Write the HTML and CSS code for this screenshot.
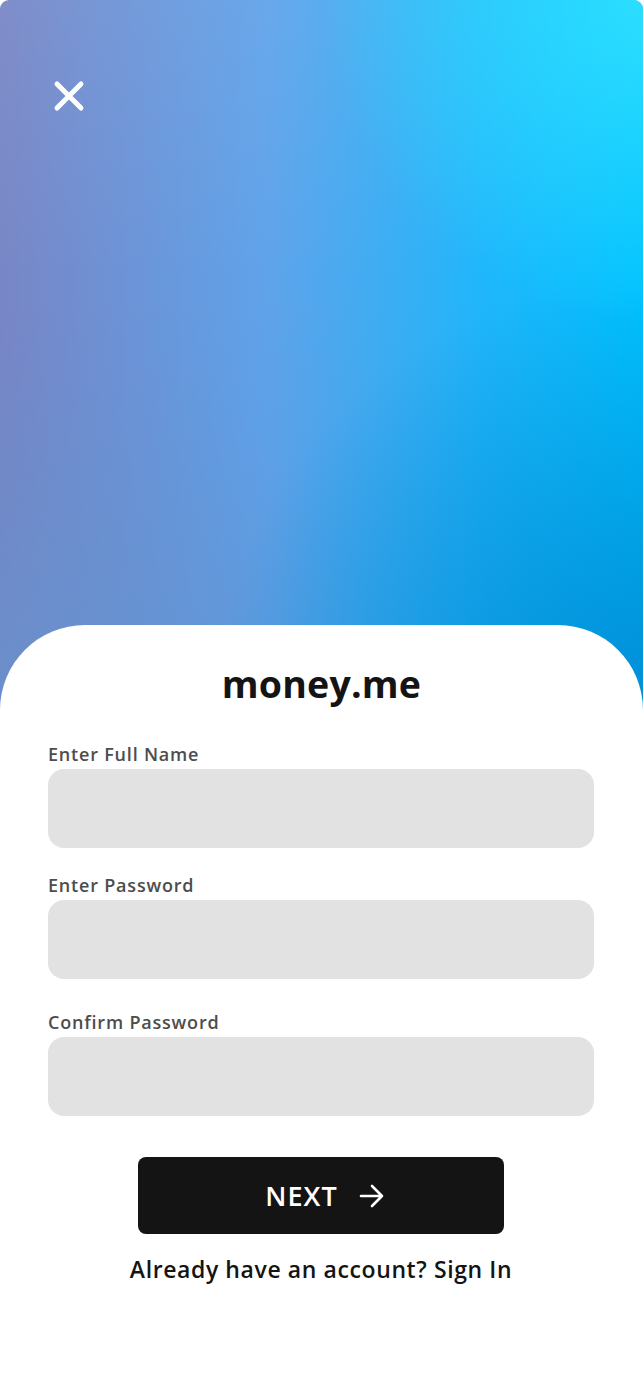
FILE: index.html
```html
<!DOCTYPE html>
<html lang="en">
<head>
<meta charset="utf-8">
<title>money.me – Sign up</title>
<link rel="stylesheet" href="styles.css">
</head>
<body>
<div class="screen">
  <header class="hero">
    <button class="close" aria-label="Close">
      <svg width="32" height="32" viewBox="0 0 32 32" fill="none" stroke="#fff" stroke-width="5" stroke-linecap="round">
        <path d="M4 4 L28 28 M28 4 L4 28"/>
      </svg>
    </button>
  </header>
  <main class="card">
    <h1 class="brand">money.me</h1>
    <form class="form">
      <label class="field">
        <span class="label">Enter Full Name</span>
        <span class="input"></span>
      </label>
      <label class="field">
        <span class="label">Enter Password</span>
        <span class="input"></span>
      </label>
      <label class="field field-last">
        <span class="label">Confirm Password</span>
        <span class="input"></span>
      </label>
      <button type="button" class="next">
        <span>NEXT</span>
        <svg width="26" height="24" viewBox="0 0 26 24" fill="none" stroke="#fff" stroke-width="2.6" stroke-linecap="round" stroke-linejoin="round">
          <path d="M2 12 H23 M13 2 L23 12 L13 22"/>
        </svg>
      </button>
      <p class="signin">Already have an account? Sign In</p>
    </form>
  </main>
</div>
</body>
</html>
```
FILE: styles.css
```css
* { box-sizing: border-box; }
html, body { margin: 0; padding: 0; background: #fff; }
body { font-family: "Open Sans", "Liberation Sans", sans-serif; }

.screen {
  width: 643px;
  height: 1389px;
  overflow: hidden;
  border-radius: 9px 9px 0 0;
  background: #fff;
}

.hero {
  height: 710px;
  padding: 80px 0 0 53px;
  background:
    radial-gradient(circle at 100% 0%, rgba(48,226,255,0.85) 0, rgba(48,226,255,0) 320px),
    radial-gradient(circle at 100% 100%, rgba(0,140,214,0.95) 0, rgba(0,140,214,0) 430px),
    radial-gradient(circle at 0% 100%, rgba(104,150,208,0.7) 0, rgba(104,150,208,0) 380px),
    linear-gradient(180deg, rgba(255,255,255,0.06) 0%, rgba(0,40,110,0) 40%, rgba(0,40,110,0.06) 100%),
    linear-gradient(90deg, #7886c6 0%, #5fa3ea 42%, #20b6fb 75%, #00c2ff 100%);
}

.close {
  display: block;
  width: 32px;
  height: 32px;
  padding: 0;
  border: 0;
  background: none;
}
.close svg { display: block; }

.card {
  margin-top: -85px;
  background: #fff;
  border-radius: 85px 85px 0 0;
  padding-top: 37px;
  position: relative;
}

.brand {
  margin: 0;
  text-align: center;
  font-size: 37.5px;
  line-height: 44px;
  font-weight: 700;
  color: #141414;
  letter-spacing: 0.2px;
}

.form {
  margin: 0;
  padding: 38px 49px 0 48px;
  display: flex;
  flex-direction: column;
}

.field {
  display: flex;
  flex-direction: column;
  gap: 5px;
  margin-bottom: 27px;
}
.field-last { margin-bottom: 41px; }
.field:nth-child(2) { margin-bottom: 33px; }

.label {
  font-size: 18px;
  line-height: 20px;
  font-weight: 600;
  letter-spacing: 0.8px;
  color: #4d4d4d;
}

.input {
  display: block;
  height: 79px;
  border-radius: 16px;
  background: #e2e2e2;
}

.next {
  align-self: center;
  width: 366px;
  height: 77px;
  border: 0;
  border-radius: 8px;
  background: #141414;
  color: #fff;
  font-family: inherit;
  font-size: 27px;
  font-weight: 600;
  letter-spacing: 1.1px;
  display: flex;
  align-items: center;
  justify-content: center;
  gap: 21px;
  padding: 0 0 0 8px;
}
.next svg { display: block; }

.signin {
  margin: 22px 0 0;
  text-align: center;
  font-size: 23px;
  line-height: 26px;
  font-weight: 600;
  letter-spacing: 0.6px;
  color: #141414;
}
```
